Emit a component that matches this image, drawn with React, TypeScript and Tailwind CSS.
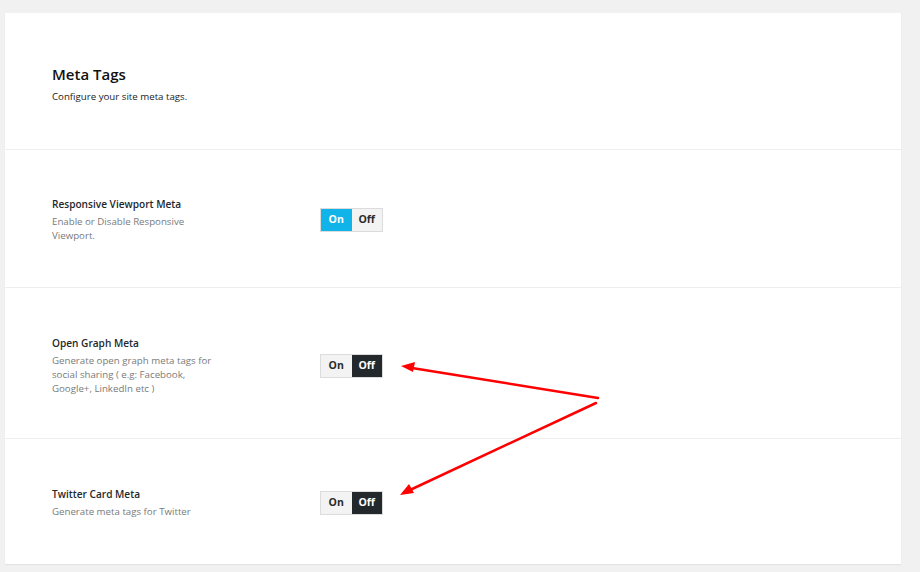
import React, { useState } from "react";

interface MetaSetting {
  id: string;
  title: string;
  description: string;
  enabled: boolean;
  rowClass: string;
}

const initialSettings: MetaSetting[] = [
  {
    id: "viewport",
    title: "Responsive Viewport Meta",
    description: "Enable or Disable Responsive Viewport.",
    enabled: true,
    rowClass: "pt-[47px] pb-[44px]",
  },
  {
    id: "opengraph",
    title: "Open Graph Meta",
    description: "Generate open graph meta tags for social sharing ( e.g: Facebook, Google+, LinkedIn etc )",
    enabled: false,
    rowClass: "pt-[48px] pb-[42px]",
  },
  {
    id: "twitter",
    title: "Twitter Card Meta",
    description: "Generate meta tags for Twitter",
    enabled: false,
    rowClass: "pt-[48px] pb-[45px]",
  },
];

function Toggle({ value, onChange }: { value: boolean; onChange: (v: boolean) => void }) {
  return (
    <div className="flex h-[24px] w-[63px] border border-[#dcdcdc] text-[10.5px] font-bold">
      <button
        onClick={() => onChange(true)}
        className={`flex-1 flex items-center justify-center ${
          value ? "bg-[#10b4e8] text-white" : "bg-[#f3f3f3] text-[#2b2b2b]"
        }`}
      >
        On
      </button>
      <button
        onClick={() => onChange(false)}
        className={`flex-1 flex items-center justify-center ${
          !value ? "bg-[#23282d] text-white" : "bg-[#f3f3f3] text-[#2b2b2b]"
        }`}
      >
        Off
      </button>
    </div>
  );
}

export default function App() {
  const [settings, setSettings] = useState(initialSettings);

  const setEnabled = (id: string, enabled: boolean) => {
    setSettings((prev) => prev.map((s) => (s.id === id ? { ...s, enabled } : s)));
  };

  return (
    <div
      className="relative w-[920px] h-[572px] overflow-hidden bg-[#f1f1f1] pt-[13px] pl-[5px]"
      style={{ fontFamily: '"Open Sans", "Noto Sans", sans-serif' }}
    >
      <div className="w-[896px] bg-white shadow-[0_1px_1px_rgba(0,0,0,0.06)]">
        {/* Header */}
        <div className="px-[47px] pt-[50px] pb-[45px] border-b border-[#eeeeee]">
          <h1 className="text-[15px] font-semibold leading-[22px] text-[#111]">Meta Tags</h1>
          <p className="mt-[5px] text-[9.7px] leading-[14px] text-[#222]">Configure your site meta tags.</p>
        </div>

        {settings.map((s, i) => (
          <div
            key={s.id}
            className={`flex items-center px-[47px] ${s.rowClass} ${
              i < settings.length - 1 ? "border-b border-[#eeeeee]" : ""
            }`}
          >
            <div className="w-[268px]">
              <div className="text-[10.1px] font-semibold leading-[14px] text-[#23282d]">{s.title}</div>
              <div className="mt-[4px] max-w-[165px] text-[9.7px] leading-[14px] text-[#7a7a7a]">
                {s.description}
              </div>
            </div>
            <Toggle value={s.enabled} onChange={(v) => setEnabled(s.id, v)} />
          </div>
        ))}
      </div>

      {/* annotation arrows */}
      <svg className="absolute left-0 top-0 pointer-events-none" width="920" height="572">
        <g stroke="#ff0000" strokeWidth="2.5" strokeLinecap="round" fill="none">
          <line x1="598" y1="398" x2="412" y2="368" />
          <line x1="596" y1="403" x2="410" y2="490" />
        </g>
        <g fill="#ff0000">
          <polygon points="401,366 415,362 413,372" />
          <polygon points="400,495 409,484 414,493" />
        </g>
      </svg>
    </div>
  );
}
